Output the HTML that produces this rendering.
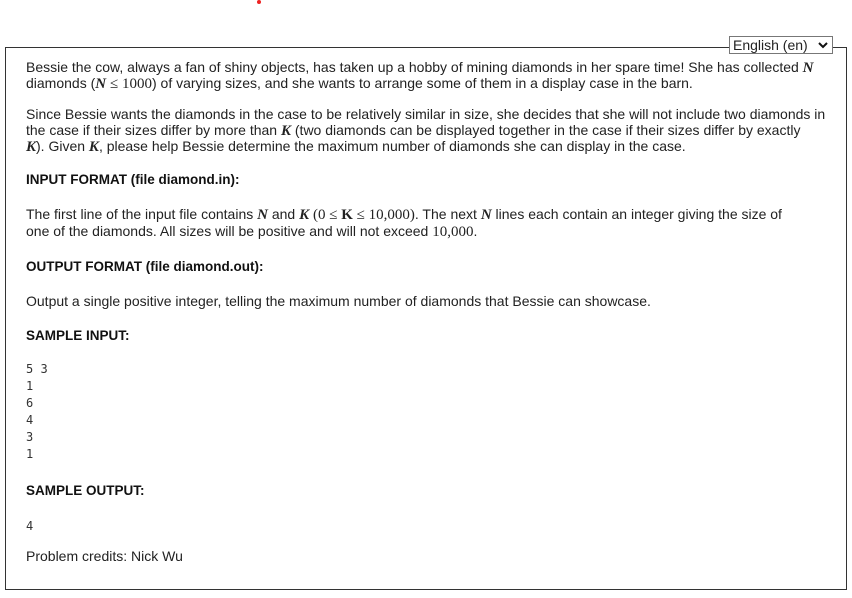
<!DOCTYPE html>
<html><head><style>
body{margin:0;width:852px;height:598px;background:#fff;font-family:"Liberation Sans",Arial,sans-serif;font-size:14px;color:#222;position:relative;overflow:hidden}
.l{position:absolute;left:26px;line-height:16px;white-space:nowrap}
.b{font-weight:bold;color:#111;font-size:13.5px}
.m{font-family:"DejaVu Sans Mono","Liberation Mono",monospace;font-size:12px;color:#333}
i{font-family:"Liberation Serif",serif;font-size:15px;font-weight:bold}
.s{font-family:"Liberation Serif",serif;font-size:15px}
#box{position:absolute;left:5px;top:47px;width:840px;height:541px;border:1px solid #333}
#sel{position:absolute;left:729px;top:36px;width:104px;height:18px;border:1px solid #777;background:#fff;font-size:14px;line-height:17px;box-sizing:border-box;padding-left:3px}
</style></head><body>
<div style="position:absolute;left:257px;top:0;width:4px;height:4px;border-radius:2px;background:#e22"></div>
<div id="box"></div>
<div id="sel">English (en)<svg style="position:absolute;right:4px;top:5px" width="10" height="7" viewBox="0 0 10 7"><path d="M1 1L5 5L9 1" stroke="#111" stroke-width="2" fill="none"/></svg></div>
<div class="l" style="top:59px">Bessie the cow, always a fan of shiny objects, has taken up a hobby of mining diamonds in her spare time! She has collected <i>N</i></div>
<div class="l" style="top:75px">diamonds (<i>N</i> <span class="s">≤ 1000</span>) of varying sizes, and she wants to arrange some of them in a display case in the barn.</div>
<div class="l" style="top:106px">Since Bessie wants the diamonds in the case to be relatively similar in size, she decides that she will not include two diamonds in</div>
<div class="l" style="top:122px">the case if their sizes differ by more than <i>K</i> (two diamonds can be displayed together in the case if their sizes differ by exactly</div>
<div class="l" style="top:138px"><i>K</i>). Given <i>K</i>, please help Bessie determine the maximum number of diamonds she can display in the case.</div>
<div class="l b" style="top:172px">INPUT FORMAT (file diamond.in):</div>
<div class="l" style="top:206px">The first line of the input file contains <i>N</i> and <i>K</i> <span class="s">(0 ≤ <b>K</b> ≤ 10,000)</span>. The next <i>N</i> lines each contain an integer giving the size of</div>
<div class="l" style="top:223px">one of the diamonds. All sizes will be positive and will not exceed <span class="s">10,000</span>.</div>
<div class="l b" style="top:259px">OUTPUT FORMAT (file diamond.out):</div>
<div class="l" style="top:293px">Output a single positive integer, telling the maximum number of diamonds that Bessie can showcase.</div>
<div class="l b" style="top:328px">SAMPLE INPUT:</div>
<div class="l m" style="top:361px;line-height:17px">5 3<br>1<br>6<br>4<br>3<br>1</div>
<div class="l b" style="top:483px">SAMPLE OUTPUT:</div>
<div class="l m" style="top:518px">4</div>
<div class="l" style="top:548px">Problem credits: Nick Wu</div>
</body></html>
